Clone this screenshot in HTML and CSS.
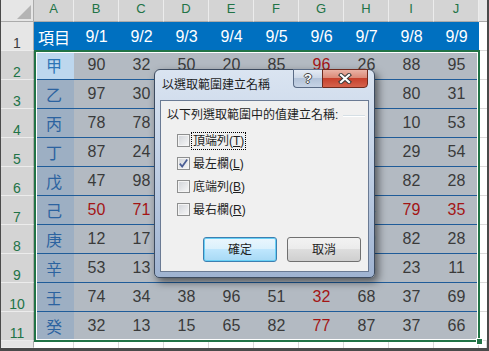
FILE: index.html
```html
<!DOCTYPE html>
<html lang="zh-Hant">
<head>
<meta charset="utf-8">
<title>以選取範圍建立名稱</title>
<link rel="stylesheet" href="styles.css">
</head>
<body>
<div class="frame">
 <div class="stack">
  <div class="sheet">
    <div class="corner"><span class="tri"></span></div>
    <div class="ch">A</div><div class="ch">B</div><div class="ch">C</div><div class="ch">D</div><div class="ch">E</div>
    <div class="ch">F</div><div class="ch">G</div><div class="ch">H</div><div class="ch">I</div><div class="ch">J</div>
    <div class="ch off"></div>

    <div class="rh off">1</div>
    <div class="hd">項目</div><div class="hd">9/1</div><div class="hd">9/2</div><div class="hd">9/3</div><div class="hd">9/4</div>
    <div class="hd">9/5</div><div class="hd">9/6</div><div class="hd">9/7</div><div class="hd">9/8</div><div class="hd">9/9</div>
    <div class="k"></div>

    <div class="rh">2</div>
    <div class="d a active">甲</div><div class="d">90</div><div class="d">32</div><div class="d">50</div><div class="d">20</div>
    <div class="d">85</div><div class="d r">96</div><div class="d">26</div><div class="d">88</div><div class="d">95</div>
    <div class="k"></div>

    <div class="rh">3</div>
    <div class="d a">乙</div><div class="d">97</div><div class="d">30</div><div class="d">44</div><div class="d">61</div>
    <div class="d">57</div><div class="d">73</div><div class="d">18</div><div class="d">80</div><div class="d">31</div>
    <div class="k"></div>

    <div class="rh">4</div>
    <div class="d a">丙</div><div class="d">78</div><div class="d">78</div><div class="d">62</div><div class="d">39</div>
    <div class="d">45</div><div class="d">27</div><div class="d">66</div><div class="d">10</div><div class="d">53</div>
    <div class="k"></div>

    <div class="rh">5</div>
    <div class="d a">丁</div><div class="d">87</div><div class="d">24</div><div class="d">19</div><div class="d">58</div>
    <div class="d">92</div><div class="d">41</div><div class="d">36</div><div class="d">29</div><div class="d">54</div>
    <div class="k"></div>

    <div class="rh">6</div>
    <div class="d a">戊</div><div class="d">47</div><div class="d">98</div><div class="d">25</div><div class="d">63</div>
    <div class="d">70</div><div class="d">14</div><div class="d">52</div><div class="d">82</div><div class="d">28</div>
    <div class="k"></div>

    <div class="rh">7</div>
    <div class="d a">己</div><div class="d r">50</div><div class="d r">71</div><div class="d">33</div><div class="d">48</div>
    <div class="d">59</div><div class="d">21</div><div class="d">64</div><div class="d r">79</div><div class="d r">35</div>
    <div class="k"></div>

    <div class="rh">8</div>
    <div class="d a">庚</div><div class="d">12</div><div class="d">17</div><div class="d">86</div><div class="d">43</div>
    <div class="d">38</div><div class="d">75</div><div class="d">60</div><div class="d">82</div><div class="d">28</div>
    <div class="k"></div>

    <div class="rh">9</div>
    <div class="d a">辛</div><div class="d">53</div><div class="d">13</div><div class="d">91</div><div class="d">22</div>
    <div class="d">67</div><div class="d">49</div><div class="d">55</div><div class="d">23</div><div class="d">11</div>
    <div class="k"></div>

    <div class="rh">10</div>
    <div class="d a">壬</div><div class="d">74</div><div class="d">34</div><div class="d">38</div><div class="d">96</div>
    <div class="d">51</div><div class="d r">32</div><div class="d">68</div><div class="d">37</div><div class="d">69</div>
    <div class="k"></div>

    <div class="rh">11</div>
    <div class="d a">癸</div><div class="d">32</div><div class="d">13</div><div class="d">15</div><div class="d">65</div>
    <div class="d">82</div><div class="d r">77</div><div class="d">87</div><div class="d">37</div><div class="d">66</div>
    <div class="k"></div>

    <div class="rh off"></div>
    <div class="e"></div><div class="e"></div><div class="e"></div><div class="e"></div><div class="e"></div>
    <div class="e"></div><div class="e"></div><div class="e"></div><div class="e"></div><div class="e"></div>
    <div class="e"></div>
  </div>

  <div class="overlay">
    <div class="sel"><span class="handle"></span></div>
  </div>
 </div>

  <div class="dialog">
    <div class="titlebar">
      <span class="title">以選取範圍建立名稱</span>
      <div class="caps">
        <span class="help">?</span>
        <span class="close">
          <svg width="14" height="11" viewBox="0 0 14 11">
            <path d="M3 2 L11 9 M11 2 L3 9" stroke="#3b3b3b" stroke-width="4.2" stroke-linecap="square"/>
            <path d="M3 2 L11 9 M11 2 L3 9" stroke="#ffffff" stroke-width="2.2" stroke-linecap="square"/>
          </svg>
        </span>
      </div>
    </div>
    <div class="client">
      <div class="glabel"><span>以下列選取範圍中的值建立名稱:</span><span class="etch"></span></div>
      <div class="checks">
        <div class="chk"><span class="box"></span><span class="lbl focus">頂端列(<u>T</u>)</span></div>
        <div class="chk"><span class="box">
          <svg width="11" height="11" viewBox="0 0 11 11"><path d="M1.8 5.6 L4.2 8.6 L9.2 1.6" fill="none" stroke="#4a5d94" stroke-width="1.7"/></svg>
        </span><span class="lbl">最左欄(<u>L</u>)</span></div>
        <div class="chk"><span class="box"></span><span class="lbl">底端列(<u>B</u>)</span></div>
        <div class="chk"><span class="box"></span><span class="lbl">最右欄(<u>R</u>)</span></div>
      </div>
      <div class="buttons">
        <span class="btn default">確定</span>
        <span class="btn">取消</span>
      </div>
    </div>
  </div>
</div>
</body>
</html>
```

FILE: styles.css
```css
* { box-sizing: border-box; }

html, body {
  margin: 0;
  padding: 0;
  background: #ffffff;
}

body {
  font-family: "Liberation Sans", "Noto Sans CJK TC", sans-serif;
}

.frame {
  position: relative;
  width: 489px;
  height: 351px;
  border-left: 1px solid #4a4a4a;
  border-right: 2px solid #4a4a4a;
  border-bottom: 3px solid #4a4a4a;
  background: #ffffff;
  overflow: hidden;
}

.stack {
  display: grid;
  height: 100%;
}
.sheet,
.overlay {
  grid-area: 1 / 1;
  display: grid;
  grid-template-columns: 33px 40px repeat(9, 45px) 1fr;
  grid-template-rows: 22px repeat(11, 29px) 1fr;
  min-height: 0;
}
.overlay {
  pointer-events: none;
  z-index: 1;
}

.sheet > div {
  display: flex;
  align-items: center;
  justify-content: center;
  min-width: 0;
}

/* corner */
.corner {
  background: #e6e6e6;
  border-right: 1px solid #ababab;
  border-bottom: 1px solid #ababab;
}
.sheet > .corner {
  align-items: flex-end;
  justify-content: flex-end;
  padding: 0 2px 2px 0;
}
.tri {
  width: 14px;
  height: 14px;
  background: #b4b4b4;
  clip-path: polygon(100% 0, 100% 100%, 0 100%);
}

/* column headers */
.ch {
  background: #d4d4d4;
  color: #217346;
  font-size: 13px;
  padding-bottom: 4px;
  border-right: 1px solid #ececec;
  border-bottom: 1px solid #ababab;
}
.ch.off {
  background: #e6e6e6;
  border-right: none;
}

/* row headers */
.sheet > .rh {
  align-items: flex-end;
  background: #d4d4d4;
  color: #217346;
  font-size: 14px;
  line-height: 14px;
  border-right: 1px solid #ababab;
  border-bottom: 1px solid #ececec;
}
.sheet > .rh.off {
  background: #e6e6e6;
  color: #3c3c3c;
}

/* title row */
.hd {
  background: #0070c0;
  color: #ffffff;
  font-size: 16px;
}

/* data */
.d {
  background: #b3bac2;
  color: #3a3a3a;
  font-size: 16px;
  border-bottom: 1px solid #1f5c99;
}
.d.a {
  background: #9dafc3;
  color: #2c63a0;
}
.d.a.active {
  background: #bdd7ee;
  color: #2e75b6;
}
.d.r {
  color: #a31515;
}

.k {
  background: #ffffff;
  border-bottom: 1px solid #dadada;
}
.e {
  background: #ffffff;
  border-right: 1px solid #d9d9d9;
}

/* selection */
.sel {
  grid-column: 2 / 12;
  grid-row: 3 / 13;
  margin: -1px -1px -1px 0;
  border: 2px solid #217346;
  box-shadow: inset 0 0 0 1px #ffffff;
  position: relative;
}
.handle {
  position: absolute;
  right: -5px;
  bottom: -5px;
  width: 7px;
  height: 7px;
  background: #217346;
  border: 1px solid #ffffff;
}

/* dialog */
.dialog {
  position: absolute;
  left: 153px;
  top: 69px;
  width: 221px;
  height: 209px;
  z-index: 2;
  display: flex;
  flex-direction: column;
  padding: 0 5px 5px;
  border: 1px solid #3d4b5f;
  border-radius: 6px 6px 5px 5px;
  background: linear-gradient(#dae4f1, #c8d6e9 35%, #9fb3d1);
  box-shadow: 3px 4px 8px rgba(0, 0, 0, 0.55);
  font-family: "Liberation Sans", "Noto Sans CJK TC", sans-serif;
  font-size: 12px;
  color: #1e1e1e;
}

.titlebar {
  height: 30px;
  display: flex;
  align-items: flex-start;
}
.title {
  margin-top: 7px;
  padding-left: 2px;
  line-height: 16px;
  font-size: 12px;
  color: #1e1e1e;
}
.caps {
  margin-left: auto;
  margin-top: -1px;
  margin-right: 1px;
  display: flex;
}
.help {
  width: 29px;
  height: 19px;
  border: 1px solid #5a6b85;
  border-right: none;
  border-radius: 0 0 0 4px;
  background: linear-gradient(#e4ebf4, #cdd8e7 45%, #b3c3d9 50%, #c6d3e5);
  display: flex;
  align-items: center;
  justify-content: center;
  font-weight: bold;
  font-size: 13px;
  color: #ffffff;
  text-shadow: 1px 0 #444, -1px 0 #444, 0 1px #444, 0 -1px #444;
}
.close {
  width: 46px;
  height: 19px;
  border: 1px solid #6e2a1e;
  border-radius: 0 0 4px 0;
  background: linear-gradient(#eab3a6, #dc8a78 45%, #c7412d 50%, #d5634d);
  display: flex;
  align-items: center;
  justify-content: center;
}

.client {
  flex: 1;
  background: #f0f0f0;
  border: 1px solid #6a7a93;
  padding: 6px 3px 0 6px;
  display: flex;
  flex-direction: column;
}

.glabel {
  display: flex;
  align-items: center;
  height: 16px;
  line-height: 16px;
  gap: 5px;
}
.etch {
  flex: 1;
  height: 2px;
  margin-top: 2px;
  border-top: 1px solid #d5dfe5;
  border-bottom: 1px solid #ffffff;
}

.checks {
  margin-top: 6px;
  padding-left: 10px;
  display: flex;
  flex-direction: column;
}
.chk {
  height: 23px;
  display: flex;
  align-items: center;
}
.box {
  width: 13px;
  height: 13px;
  margin-right: 1px;
  border: 1px solid #8e8f8f;
  box-shadow: inset 0 0 0 1px #f4f4f4;
  background: linear-gradient(135deg, #d0d3d8, #f8f8f8);
  display: flex;
  align-items: center;
  justify-content: center;
}
.lbl {
  padding: 0 1px;
  border: 1px dotted transparent;
  line-height: 16px;
}
.lbl.focus {
  border-color: #000000;
}
.lbl u {
  text-decoration: underline;
}

.buttons {
  margin-top: 16px;
  padding-left: 36px;
  display: flex;
  gap: 10px;
}
.btn {
  width: 74px;
  height: 25px;
  border: 1px solid #707070;
  border-radius: 3px;
  background: linear-gradient(#f2f2f2, #ebebeb 50%, #dddddd 50%, #cfcfcf);
  display: flex;
  align-items: center;
  justify-content: center;
  line-height: 16px;
}
.btn.default {
  border-color: #3c7fb1;
  box-shadow: inset 0 0 0 1px #68d0f5;
  background: linear-gradient(#eaf6fd, #d9f0fc 50%, #bee6fd 50%, #a7d9f5);
}
```
